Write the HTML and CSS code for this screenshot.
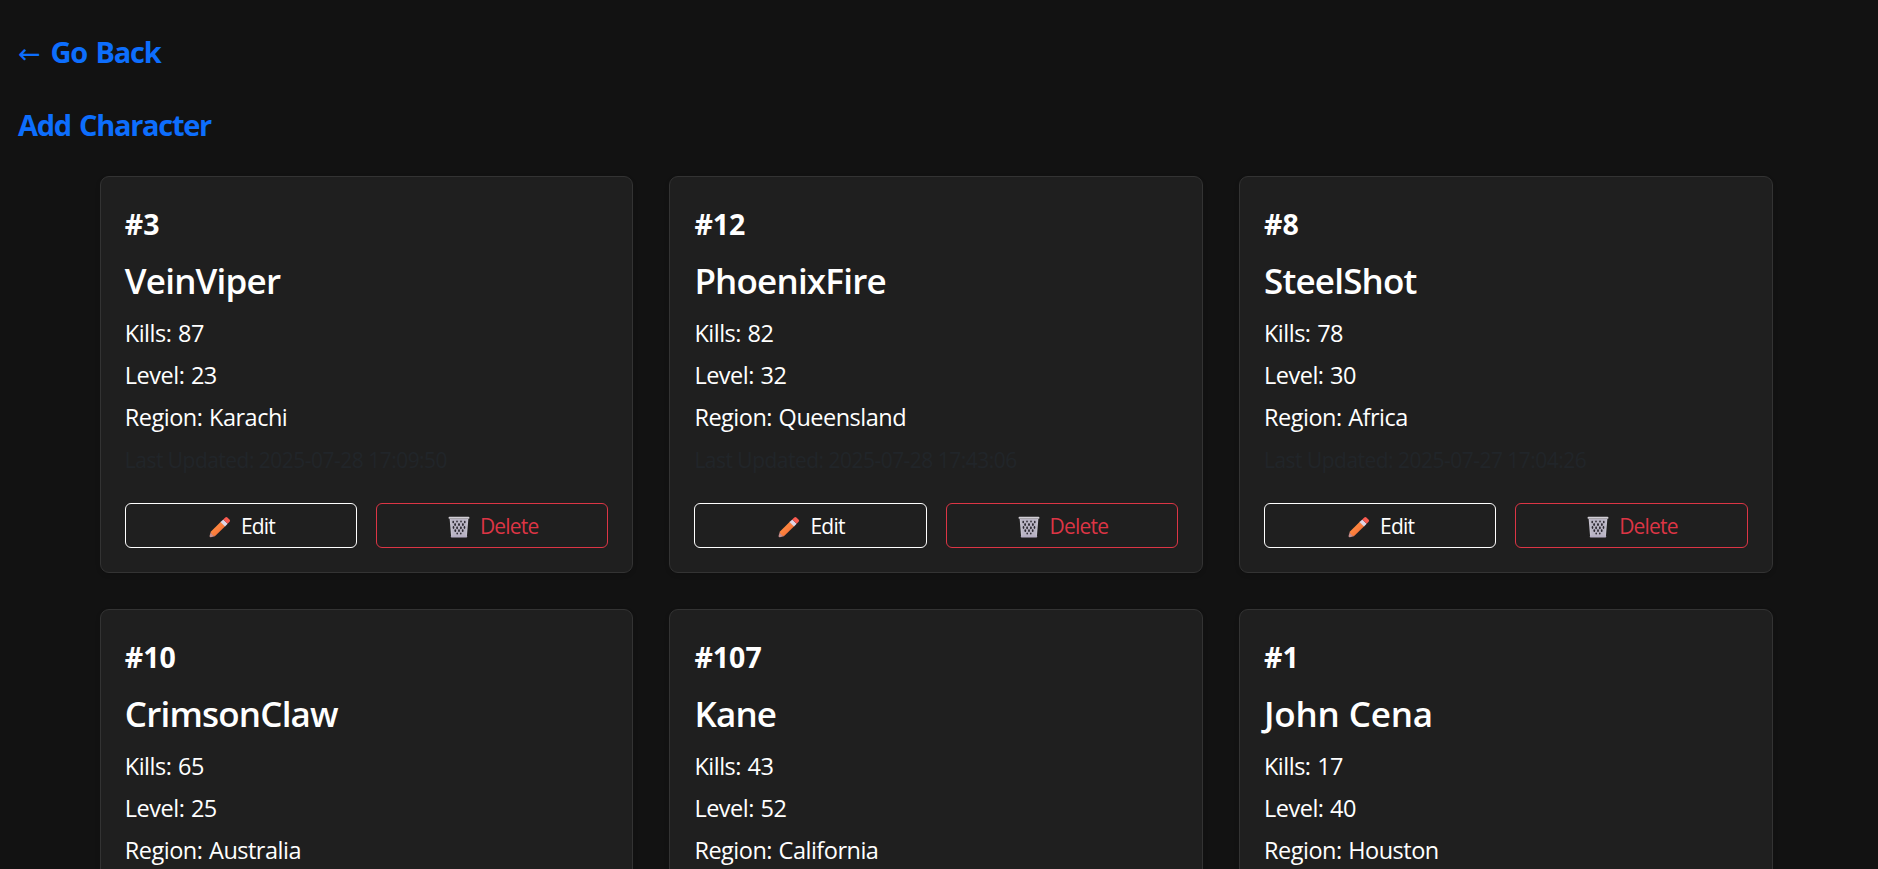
FILE: index.html
```html
<!DOCTYPE html>
<html lang="en">
<head>
<meta charset="utf-8">
<title>Characters</title>
<link rel="stylesheet" href="styles.css">
</head>
<body>
<svg class="sprite" aria-hidden="true">
  <defs>
    <linearGradient id="wood" x1="0" y1="0" x2="1" y2="1">
      <stop offset="0" stop-color="#ff9a4a"/><stop offset=".5" stop-color="#fb7f3c"/><stop offset="1" stop-color="#f2603c"/>
    </linearGradient>
    <symbol id="pencil" viewBox="0 0 22 22">
      <path d="M1.7 16.2 5.8 20.2 1.9 21.3Q.3 21.4.6 19.8Z" fill="#c98d8c"/>
      <path d="M12.1 5.6 16.4 9.9 5.9 20.3Q3.2 19.8 1.5 16.1Z" fill="url(#wood)"/>
      <path d="M14.3 3.4 18.7 7.8 16 10.4 11.5 5.9Z" fill="#e0d5e5"/>
      <path d="M14.2 3.5 16.3 1.4Q17.3.4 18.4 1.4L20.7 3.7Q21.6 4.7 20.6 5.8L18.6 7.8Z" fill="#fb5b50"/>
    </symbol>
    <symbol id="trash" viewBox="0 0 22 22">
      <path d="M2.5 3 3.7 20H18.1L19.5 3Z" fill="#b9b4c4"/>
      <g fill="#29262e">
        <ellipse cx="5.2" cy="6" rx=".8" ry="1.2"/><ellipse cx="9" cy="5.5" rx=".8" ry="1.1"/><ellipse cx="13" cy="5.5" rx=".8" ry="1.1"/><ellipse cx="16.8" cy="6" rx=".8" ry="1.2"/>
        <ellipse cx="7.1" cy="8.5" rx=".9" ry="1.5"/><ellipse cx="11" cy="8.5" rx=".9" ry="1.5"/><ellipse cx="14.9" cy="8.5" rx=".9" ry="1.5"/>
        <ellipse cx="5.5" cy="11.5" rx=".8" ry="1.4"/><ellipse cx="9.1" cy="11.7" rx=".9" ry="1.5"/><ellipse cx="12.9" cy="11.7" rx=".9" ry="1.5"/><ellipse cx="16.5" cy="11.5" rx=".8" ry="1.4"/>
        <ellipse cx="7.3" cy="14.7" rx=".9" ry="1.4"/><ellipse cx="11" cy="14.7" rx=".9" ry="1.4"/><ellipse cx="14.7" cy="14.7" rx=".9" ry="1.4"/>
        <ellipse cx="9.2" cy="17.5" rx=".8" ry="1"/><ellipse cx="12.8" cy="17.5" rx=".8" ry="1"/>
      </g>
      <path d="M2.4 3 3.8 20M19.6 3 18.2 20" stroke="#c3bfcc" stroke-width="1.5" fill="none"/>
      <rect x=".6" y=".7" width="20.8" height="2.1" rx=".9" fill="#d2cfd6"/>
      <rect x="2.8" y="19.4" width="16.4" height="2.1" rx=".8" fill="#b5aec3"/>
    </symbol>
  </defs>
</svg>
<nav class="links">
  <a class="link" href="#"><span class="arrow">←</span><span class="back">Go Back</span></a>
  <a class="link add" href="#">Add Character</a>
</nav>
<main class="grid">
  <article class="card">
    <h4 class="rank">#3</h4><h2 class="name">VeinViper</h2>
    <p class="stat">Kills: 87</p><p class="stat">Level: 23</p><p class="stat">Region: Karachi</p>
    <p class="updated">Last Updated: 2025-07-28 17:09:50</p>
    <div class="actions"><button class="btn edit"><svg class="icon"><use href="#pencil"/></svg>Edit</button><button class="btn delete"><svg class="icon"><use href="#trash"/></svg>Delete</button></div>
  </article>
  <article class="card">
    <h4 class="rank">#12</h4><h2 class="name">PhoenixFire</h2>
    <p class="stat">Kills: 82</p><p class="stat">Level: 32</p><p class="stat">Region: Queensland</p>
    <p class="updated">Last Updated: 2025-07-28 17:43:06</p>
    <div class="actions"><button class="btn edit"><svg class="icon"><use href="#pencil"/></svg>Edit</button><button class="btn delete"><svg class="icon"><use href="#trash"/></svg>Delete</button></div>
  </article>
  <article class="card">
    <h4 class="rank">#8</h4><h2 class="name">SteelShot</h2>
    <p class="stat">Kills: 78</p><p class="stat">Level: 30</p><p class="stat">Region: Africa</p>
    <p class="updated">Last Updated: 2025-07-27 17:04:26</p>
    <div class="actions"><button class="btn edit"><svg class="icon"><use href="#pencil"/></svg>Edit</button><button class="btn delete"><svg class="icon"><use href="#trash"/></svg>Delete</button></div>
  </article>
  <article class="card">
    <h4 class="rank">#10</h4><h2 class="name">CrimsonClaw</h2>
    <p class="stat">Kills: 65</p><p class="stat">Level: 25</p><p class="stat">Region: Australia</p>
  </article>
  <article class="card">
    <h4 class="rank">#107</h4><h2 class="name">Kane</h2>
    <p class="stat">Kills: 43</p><p class="stat">Level: 52</p><p class="stat">Region: California</p>
  </article>
  <article class="card">
    <h4 class="rank">#1</h4><h2 class="name loose">John Cena</h2>
    <p class="stat">Kills: 17</p><p class="stat">Level: 40</p><p class="stat">Region: Houston</p>
  </article>
</main>
</body>
</html>
```
FILE: styles.css
```css
* { box-sizing: border-box; }
html { height: 869px; overflow: hidden; }
body {
  margin: 0;
  height: 869px;
  overflow: hidden;
  background: #121212;
  color: #fff;
  font-family: "Open Sans", "Noto Sans", sans-serif;
}
.sprite { display: block; width: 0; height: 0; }
h2, h4, p { margin: 0; }
.links {
  display: flex;
  flex-direction: column;
  align-items: flex-start;
  gap: 29px;
  padding: 30px 18px 0;
}
.link {
  display: flex;
  height: 44px;
  line-height: 44px;
  font-size: 29px;
  font-weight: 700;
  letter-spacing: -1.2px;
  word-spacing: 2px;
  color: #0d6efd;
  text-decoration: none;
  white-space: nowrap;
}
.add { letter-spacing: -1.3px; }
.arrow {
  width: 32.5px;
  line-height: 48px;
  font-family: "DejaVu Sans", sans-serif;
  font-size: 27px;
  font-weight: 400;
  letter-spacing: 0;
}
.grid {
  display: grid;
  grid-template-columns: repeat(3, 533.6px);
  grid-auto-rows: 397px;
  gap: 36px;
  padding: 29px 99.8px 0;
}
.card {
  display: flex;
  flex-direction: column;
  padding: 24px;
  background: #1f1f1f;
  border: 1px solid #333;
  border-radius: 9px;
  box-shadow: 0 2px 5px rgba(0, 0, 0, 0.12);
  white-space: nowrap;
}
.rank { height: 52px; line-height: 47px; font-size: 28.5px; font-weight: 700; }
.name { height: 59px; line-height: 56px; font-size: 35px; font-weight: 600; letter-spacing: -0.8px; }
.loose { letter-spacing: -0.15px; }
.stat { height: 42px; line-height: 43px; font-size: 23.5px; letter-spacing: -0.5px; word-spacing: 1px; }
.updated { height: 42px; line-height: 44px; font-size: 21px; letter-spacing: -0.52px; color: #212529; }
.actions { display: flex; gap: 19px; margin-top: 23px; }
.btn {
  flex: 1;
  display: flex;
  align-items: center;
  justify-content: center;
  gap: 10px;
  height: 45px;
  padding: 2px 0 0 2px;
  background: transparent;
  border: 1px solid currentColor;
  border-radius: 6px;
  font: 400 21px/41px "Open Sans", "Noto Sans", sans-serif;
  letter-spacing: -0.8px;
}
.edit { color: #fff; }
.delete { color: #dc3545; }
.icon { width: 22px; height: 22px; }
```
